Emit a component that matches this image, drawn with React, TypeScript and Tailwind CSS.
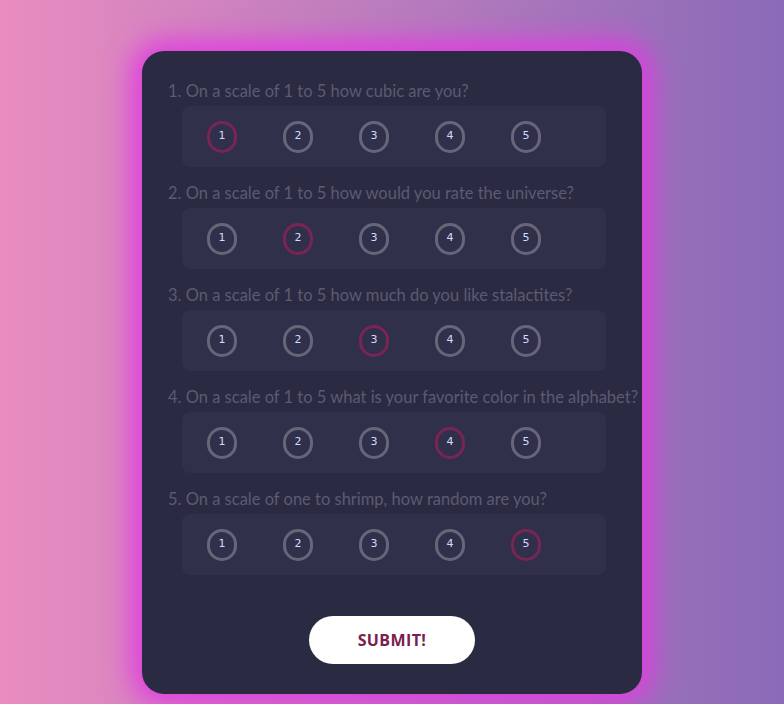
import React, { useState } from 'react';

const questions = [
  'On a scale of 1 to 5 how cubic are you?',
  'On a scale of 1 to 5 how would you rate the universe?',
  'On a scale of 1 to 5 how much do you like stalactites?',
  'On a scale of 1 to 5 what is your favorite color in the alphabet?',
  'On a scale of one to shrimp, how random are you?',
];

const App: React.FC = () => {
  const [answers, setAnswers] = useState<number[]>([1, 2, 3, 4, 5]);

  const pick = (q: number, v: number) => {
    setAnswers((prev) => prev.map((a, i) => (i === q ? v : a)));
  };

  return (
    <div className="min-h-screen w-full bg-gradient-to-r from-[#ea8cc0] to-[#8a6ab8] font-['Lato',sans-serif]">
      <div className="flex justify-center pt-[51px]">
        <form
          className="w-[500px] rounded-[22px] bg-[#2a2a42] shadow-[0_0_28px_10px_#e03ce0] pt-[30px] pb-[30px]"
          onSubmit={(e) => e.preventDefault()}
        >
          {questions.map((q, qi) => (
            <div key={qi} className="pl-[26px] pr-[36px] mb-[16px] last:mb-0">
              <p className="text-[16.5px] leading-[20px] text-[#5b5b72] whitespace-nowrap">
                {qi + 1}. {q}
              </p>
              <div className="ml-[14px] mt-[5px] h-[61px] rounded-[8px] bg-[#30304a] flex items-center gap-[46px] pl-[25px]">
                {[1, 2, 3, 4, 5].map((v) => (
                  <button
                    key={v}
                    type="button"
                    onClick={() => pick(qi, v)}
                    className={
                      'w-[30px] h-[32px] rounded-full border-[3px] flex items-center justify-center text-[11px] text-[#d4daff] font-["DejaVu_Sans",sans-serif] ' +
                      (answers[qi] === v ? 'border-[#7a2456]' : 'border-[#66667a]')
                    }
                  >
                    {v}
                  </button>
                ))}
              </div>
            </div>
          ))}
          <div className="flex justify-center mt-[41px]">
            <button
              type="submit"
              className="w-[166px] h-[48px] rounded-full bg-white text-[#7a2050] font-bold text-[16px] tracking-wide font-['Open_Sans',sans-serif]"
            >
              SUBMIT!
            </button>
          </div>
        </form>
      </div>
    </div>
  );
};

export default App;
